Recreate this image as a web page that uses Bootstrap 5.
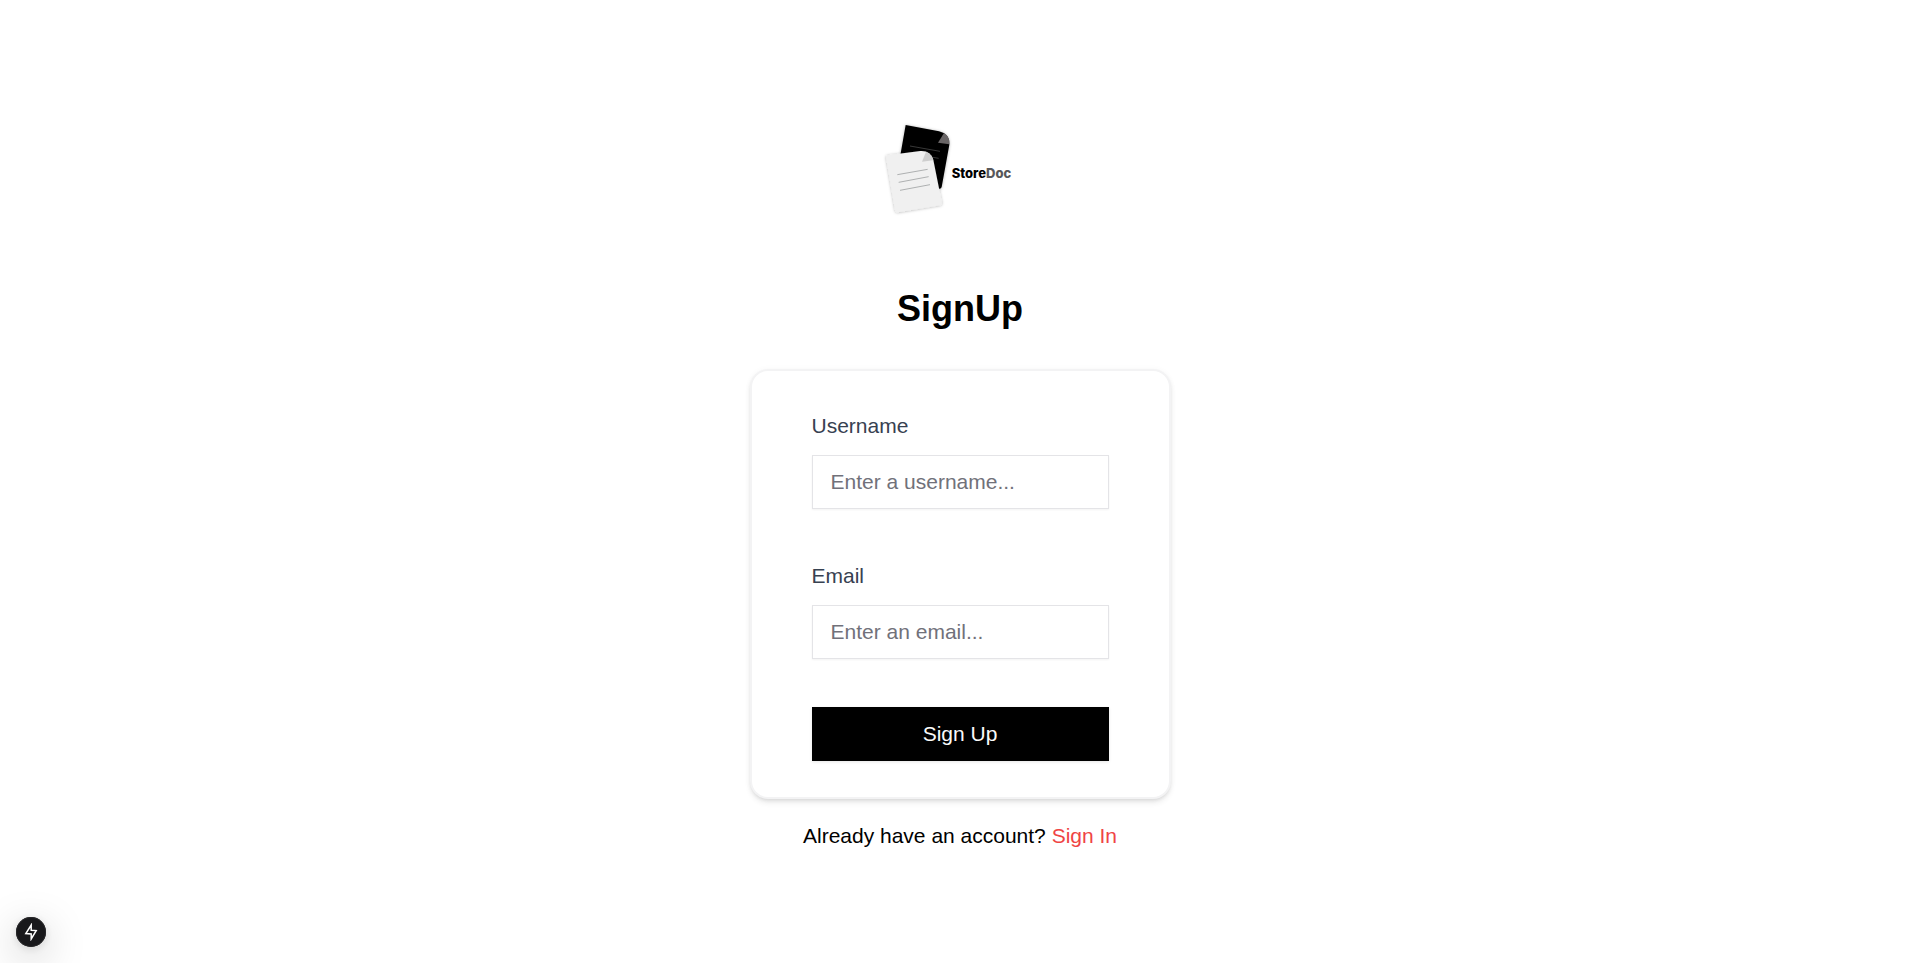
<!DOCTYPE html>
<html lang="en">
<head>
<meta charset="utf-8">
<meta name="viewport" content="width=device-width, initial-scale=1">
<title>StoreDoc - SignUp</title>
<link href="https://cdn.jsdelivr.net/npm/bootstrap@5.3.0/dist/css/bootstrap.min.css" rel="stylesheet">
<style>
  body { font-family: "Liberation Sans", Arial, sans-serif; font-size: 21px; line-height: 28px; color: #000; background: #fff; }
  .page-shell { padding-top: 110px; }
  .brand-logo { width: 180px; height: 120px; }
  .brand-word { font-family: Inter, sans-serif; font-weight: 800; font-size: 39px; }
  .page-title { font-size: 36px; line-height: 40px; margin: 59px 0 40px; }
  .signup-card { max-width: 421px; border: 2px solid #f3f3f4; border-radius: 18px; padding: 41px 60px 36px; background: #fff;
    box-shadow: 0 4px 6px -1px rgba(0,0,0,.1), 0 2px 4px -2px rgba(0,0,0,.1), 0 0 6px rgba(0,0,0,.03); }
  .field-label { color: #374151; margin-bottom: 15px; }
  .field-group { margin-bottom: 53px; }
  .field-group.last-field { margin-bottom: 48px; }
  .form-control, .form-control:focus { height: 54px; font-size: 21px; padding: 0 18px; border: 1px solid #e4e4e7; border-radius: 0; color: #000; box-shadow: 0 1px 2px rgba(0,0,0,.05); }
  .form-control::placeholder { color: #71717a; }
  .submit-btn, .submit-btn:hover { height: 54px; font-size: 21px; border: 0; border-radius: 0; background: #000; color: #fafafa; padding: 0; box-shadow: 0 1px 3px rgba(0,0,0,.1); }
  .signin-note { margin: 23px 0 40px; }
  .signin-note a { color: #ef4444; }
  .dev-toggle { left: 16px; bottom: 16px; width: 30px; height: 30px; background: #18181b;
    box-shadow: inset 0 0 0 1px #29292b, 0 11px 40px rgba(0,0,0,.25), 0 2px 10px rgba(0,0,0,.12); }
</style>
</head>
<body>
<main class="page-shell container-fluid d-flex flex-column align-items-center">
  <svg class="brand-logo" viewBox="0 0 540 360" role="img" aria-label="StoreDoc">
    <defs>
      <filter id="paperShadow" x="-20%" y="-20%" width="140%" height="140%">
        <feDropShadow dx="0" dy="1" stdDeviation="5" flood-color="#000" flood-opacity=".3"/>
      </filter>
    </defs>
    <g filter="url(#paperShadow)">
      <path d="M107 45 207 64Q240 72 238 104L215 231Q213 238 206 236L78 209Z" fill="#000"/>
    </g>
    <path d="M222 69Q240 80 238 103L204 98Z" fill="#696566"/>
    <path d="M120 108 210 124M116 129 206 145" stroke="#555" stroke-width="2"/>
    <g filter="url(#paperShadow)">
      <path d="M48 142Q47 137 53 136L151 123Q181 121 190 150L216 280Q217 285 210 286L84 307Q77 308 75 301Z" fill="#f0f0f0"/>
    </g>
    <path d="M168 125Q187 133 190 151L156 155Z" fill="#cecece"/>
    <path d="M82 194 173 178M86 217 176 200M90 241 180 224" stroke="#aeb0b1" stroke-width="3"/>
    <text class="brand-word" x="245" y="203">Store<tspan fill="#58585a">Doc</tspan></text>
  </svg>
  <h1 class="page-title fw-bold">SignUp</h1>
  <form class="signup-card w-100">
    <div class="field-group">
      <label class="field-label d-block" for="username">Username</label>
      <input class="form-control" type="text" id="username" placeholder="Enter a username...">
    </div>
    <div class="field-group last-field">
      <label class="field-label d-block" for="email">Email</label>
      <input class="form-control" type="email" id="email" placeholder="Enter an email...">
    </div>
    <button class="btn submit-btn w-100 d-block" type="submit">Sign Up</button>
  </form>
  <p class="signin-note">Already have an account? <a class="text-decoration-none" href="#">Sign In</a></p>
</main>
<button class="dev-toggle position-fixed rounded-circle border-0 p-0 d-flex align-items-center justify-content-center" type="button" aria-label="Developer tools">
  <svg width="18" height="18" viewBox="0 0 18 18" fill="none" stroke="#fff" stroke-width="1.5" stroke-linejoin="miter"><path d="M9.2 2V7.2L14.2 7.6L9.2 16V10.9L3.8 10.5Z"/></svg>
</button>
<script src="https://cdn.jsdelivr.net/npm/bootstrap@5.3.0/dist/js/bootstrap.bundle.min.js"></script>
</body>
</html>
